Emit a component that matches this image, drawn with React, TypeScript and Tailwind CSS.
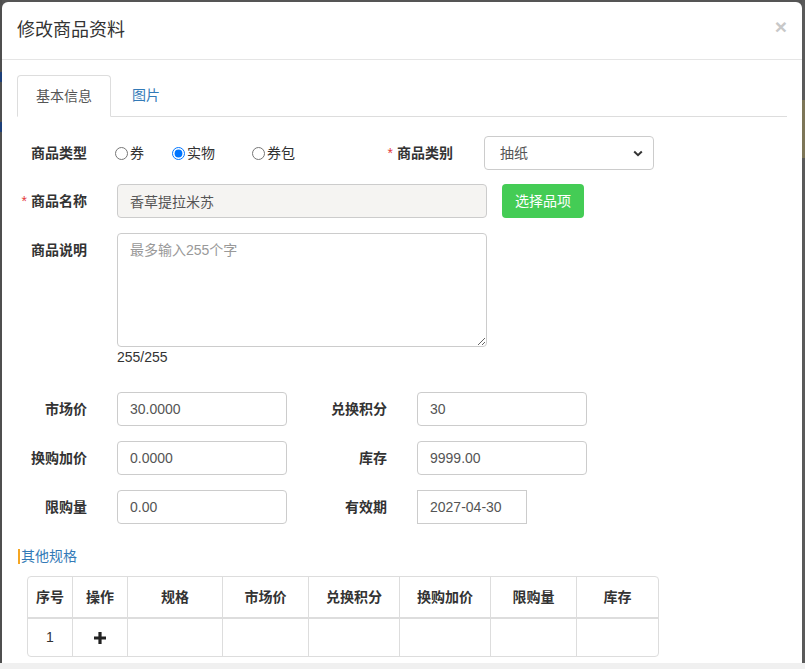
import React from 'react';

const FONT = { fontFamily: '"Liberation Sans", "Noto Sans CJK SC", sans-serif' };

const COLS = ['序号', '操作', '规格', '市场价', '兑换积分', '换购加价', '限购量', '库存'];

function Label({ text, required = false }: { text: string; required?: boolean }) {
  return (
    <div className="w-[70px] shrink-0 text-right text-[14px] font-bold text-[#333] leading-[20px]">
      {required && <span className="text-[#e4393c] font-normal mr-[4px]">*</span>}
      {text}
    </div>
  );
}

function TextInput({ value, width = 'w-[170px]' }: { value: string; width?: string }) {
  return (
    <input
      readOnly
      value={value}
      className={`${width} h-[34px] shrink-0 rounded-[4px] border border-[#ccc] bg-white px-[12px] text-[14px] text-[#555] outline-none`}
    />
  );
}

function Radio({ text, checked = false, width }: { text: string; checked?: boolean; width: string }) {
  return (
    <label className={`${width} flex items-center gap-[2px] text-[14px] text-[#333]`}>
      <input type="radio" readOnly checked={checked} className="m-0 h-[13px] w-[13px]" />
      <span>{text}</span>
    </label>
  );
}

export default function App() {
  return (
    <div className="flex h-[669px] w-[805px] flex-col overflow-hidden bg-[#555]" style={FONT}>
      <div className="flex h-[663px] shrink-0">
        {/* backdrop strip, left */}
        <div className="flex w-[2px] shrink-0 flex-col bg-[#4f4f4f]">
          <div className="h-[72px]" />
          <div className="h-[10px] bg-[#1d3f78]" />
          <div className="h-[40px]" />
          <div className="h-[10px] bg-[#1d3f78]" />
        </div>

        {/* modal */}
        <div className="mt-[2px] flex h-[661px] w-[800px] shrink-0 flex-col overflow-hidden rounded-t-[6px] bg-white">
          <div className="flex h-[58px] shrink-0 items-center justify-between border-b border-[#e5e5e5] px-[15px]">
            <h4 className="mb-[2px] text-[18px] leading-[26px] text-[#333]">修改商品资料</h4>
            <span className="mb-[8px] text-[21px] font-bold leading-none text-[#c8c8c8]">×</span>
          </div>

          <div className="px-[15px] pt-[15px]">
            {/* tabs */}
            <div className="flex h-[42px] border-b border-[#ddd]">
              <div className="-mb-px flex h-[42px] items-center rounded-t-[4px] border border-[#ddd] border-b-white bg-white px-[18px] text-[14px] text-[#555]">
                基本信息
              </div>
              <div className="ml-[2px] flex h-[41px] items-center px-[19px] text-[14px] text-[#337ab7]">图片</div>
            </div>

            {/* type / category */}
            <div className="mt-[19px] flex h-[34px] items-center">
              <Label text="商品类型" />
              <div className="ml-[28px] flex w-[268px] items-center">
                <Radio text="券" width="w-[57px]" />
                <Radio text="实物" checked width="w-[80px]" />
                <Radio text="券包" width="w-[60px]" />
              </div>
              <Label text="商品类别" required />
              <div className="ml-[31px] flex h-[34px] w-[170px] items-center justify-between rounded-[4px] border border-[#ccc] pl-[15px] pr-[10px] text-[14px] text-[#555]">
                <span>抽纸</span>
                <svg width="10" height="7" viewBox="0 0 10 7">
                  <path d="M1.2 1.5 L5 5.2 L8.8 1.5" fill="none" stroke="#333" strokeWidth="2" />
                </svg>
              </div>
            </div>

            {/* name */}
            <div className="mt-[14px] flex h-[34px] items-center">
              <Label text="商品名称" required />
              <input
                readOnly
                value="香草提拉米苏"
                className="ml-[30px] h-[34px] w-[370px] rounded-[4px] border border-[#ccc] bg-[#f5f4f2] px-[12px] text-[14px] text-[#555] outline-none"
              />
              <button className="ml-[15px] h-[34px] w-[82px] rounded-[4px] bg-[#44cc55] text-[14px] text-white">
                选择品项
              </button>
            </div>

            {/* description */}
            <div className="mt-[15px] flex">
              <div className="pt-[7px]">
                <Label text="商品说明" />
              </div>
              <div className="ml-[30px] flex flex-col">
                <textarea
                  readOnly
                  placeholder="最多输入255个字"
                  className="block h-[114px] w-[370px] rounded-[4px] border border-[#ccc] px-[12px] py-[6px] text-[14px] leading-[20px] text-[#555] outline-none placeholder:text-[#999]"
                />
                <div className="text-[14px] leading-[20px] text-[#333]">255/255</div>
              </div>
            </div>

            {/* prices */}
            <div className="mt-[25px] flex flex-col gap-[15px]">
              <div className="flex h-[34px] items-center">
                <Label text="市场价" />
                <div className="ml-[30px]"><TextInput value="30.0000" /></div>
                <div className="ml-[30px]"><Label text="兑换积分" /></div>
                <div className="ml-[30px]"><TextInput value="30" /></div>
              </div>
              <div className="flex h-[34px] items-center">
                <Label text="换购加价" />
                <div className="ml-[30px]"><TextInput value="0.0000" /></div>
                <div className="ml-[30px]"><Label text="库存" /></div>
                <div className="ml-[30px]"><TextInput value="9999.00" /></div>
              </div>
              <div className="flex h-[34px] items-center">
                <Label text="限购量" />
                <div className="ml-[30px]"><TextInput value="0.00" /></div>
                <div className="ml-[30px]"><Label text="有效期" /></div>
                <input
                  readOnly
                  value="2027-04-30"
                  className="ml-[30px] h-[34px] w-[110px] border border-[#ccc] px-[12px] text-[14px] text-[#555] outline-none"
                />
              </div>
            </div>

            {/* other specs */}
            <div className="mt-[22px] flex h-[20px] items-center pl-[1px]">
              <span className="h-[15px] w-[2px] bg-[#f5a623]" />
              <span className="ml-[1px] text-[14px] text-[#337ab7]">其他规格</span>
            </div>

            <div className="ml-[10px] mt-[10px] w-[632px] overflow-hidden rounded-[4px] border border-[#ddd]">
              <div className="grid grid-cols-[44px_55px_95px_86px_91px_91px_86px_82px]">
                {COLS.map((c, i) => (
                  <div
                    key={c}
                    className={`flex h-[42px] items-center justify-center border-b-2 border-[#ddd] text-[14px] font-bold text-[#333] ${i > 0 ? 'border-l' : ''}`}
                  >
                    {c}
                  </div>
                ))}
                {COLS.map((c, i) => (
                  <div
                    key={'r' + c}
                    className={`flex h-[37px] items-center justify-center border-[#ddd] text-[14px] text-[#333] ${i > 0 ? 'border-l' : ''}`}
                  >
                    {i === 0 && '1'}
                    {i === 1 && (
                      <svg width="14" height="14" viewBox="0 0 14 14">
                        <path d="M7 1 V13 M1 7 H13" stroke="#222" strokeWidth="3.2" />
                      </svg>
                    )}
                  </div>
                ))}
              </div>
            </div>
          </div>
        </div>

        {/* backdrop strip, right */}
        <div className="flex w-[3px] shrink-0 flex-col bg-[#5a5a5a]">
          <div className="h-[100px]" />
          <div className="h-[58px] bg-[#7d7658]" />
        </div>
      </div>
      <div className="flex-1 bg-[#f0f0f0]" />
    </div>
  );
}
